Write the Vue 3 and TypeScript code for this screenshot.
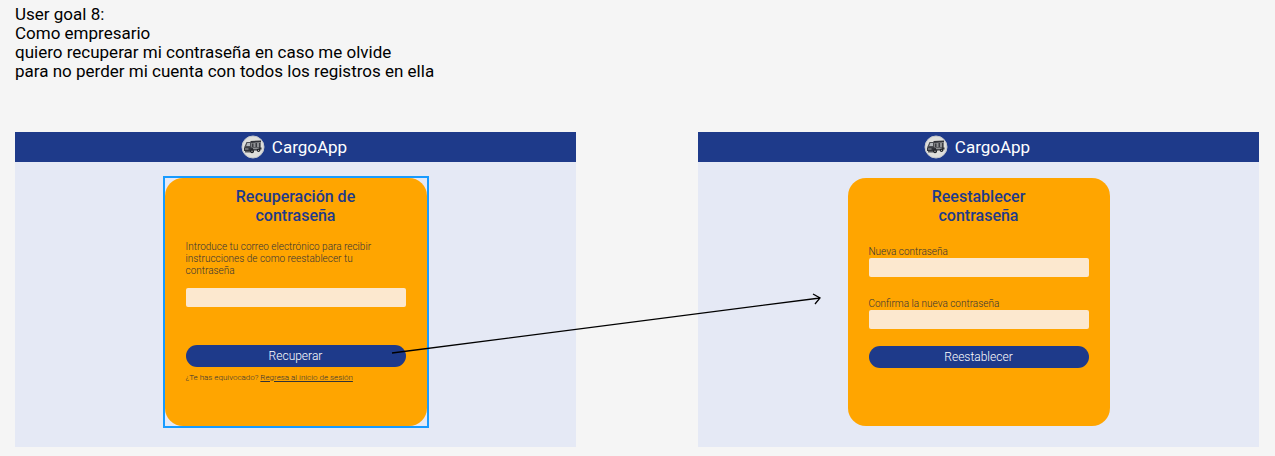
<script setup lang="ts">
interface Field {
  id: string
  label: string
  type: string
}

const story: string[] = [
  'User goal 8:',
  'Como empresario',
  'quiero recuperar mi contraseña en caso me olvide',
  'para no perder mi cuenta con todos los registros en ella',
]

const resetFields: Field[] = [
  { id: 'new-password', label: 'Nueva contraseña', type: 'password' },
  { id: 'confirm-password', label: 'Confirma la nueva contraseña', type: 'password' },
]

const screens: string[] = ['recover', 'reset']
</script>

<template>
  <main class="canvas">
    <p class="story">
      <span v-for="line in story" :key="line">{{ line }}</span>
    </p>

    <div class="board">
      <section v-for="screen in screens" :key="screen" class="screen">
        <header class="bar">
          <svg class="logo" viewBox="0 0 24 24" aria-hidden="true">
            <circle cx="12" cy="12" r="11" fill="#dededb" stroke="#c3c6cc" stroke-width="1" />
            <path d="M9.5 6L20 5.5V7.5L9.5 8Z" fill="#303238" />
            <path d="M10.5 8H19.5V13H10.5Z" fill="#8e9093" />
            <path d="M11 8.5H12.5V12H11ZM14.5 8H16V12H14.5ZM18 8H19.5V13H18Z" fill="#3b3d42" />
            <path d="M5.5 7H10.5V14.5H3.5V11.5Z" fill="#4b4d52" />
            <path d="M6.3 8H9V11H5.2Z" fill="#b4b8bc" />
            <path d="M3 12.5H20.5V14.5L11 16H3Z" fill="#303238" />
            <path d="M4 14H7.5M12 13.7H18" stroke="#a6a8aa" stroke-width="1" />
            <path d="M4 16H9V17.5H4Z" fill="#55575b" />
            <circle cx="11" cy="16.2" r="2" fill="#1d1f23" />
            <circle cx="11" cy="16.2" r=".7" fill="#bbb" />
            <circle cx="17.5" cy="15.3" r="1.7" fill="#1d1f23" />
            <circle cx="17.5" cy="15.3" r=".6" fill="#bbb" />
          </svg>
          <span>CargoApp</span>
        </header>

        <div v-if="screen === 'recover'" class="holder selected">
          <form class="card recover" @submit.prevent>
            <h2>Recuperación de contraseña</h2>
            <label for="email">Introduce tu correo electrónico para recibir instrucciones de como reestablecer tu contraseña</label>
            <input id="email" type="email" />
            <button type="submit">Recuperar</button>
            <p class="hint">¿Te has equivocado? <a href="#">Regresa al inicio de sesión</a></p>
          </form>
        </div>

        <div v-else class="holder">
          <form class="card reset" @submit.prevent>
            <h2>Reestablecer contraseña</h2>
            <div v-for="field in resetFields" :key="field.id" class="field">
              <label :for="field.id">{{ field.label }}</label>
              <input :id="field.id" :type="field.type" />
            </div>
            <button type="submit">Reestablecer</button>
          </form>
        </div>
      </section>

      <svg class="arrow" viewBox="0 0 430 66" aria-hidden="true">
        <path d="M1 60L429 5M422 1L429 5L424 11" fill="none" stroke="#000" stroke-width="1.3" />
      </svg>
    </div>
  </main>
</template>

<style>
body {
  margin: 0;
  background: #f5f5f5;
}
</style>

<style scoped>
.canvas {
  padding: 5px 16px 8px 15px;
  font-family: Roboto, "Liberation Sans", sans-serif;
  color: #000;
}

.story {
  margin: 0 0 51px;
  font-size: 17px;
  line-height: 19px;
}

.story span {
  display: block;
}

.board {
  position: relative;
  display: grid;
  grid-template-columns: 1fr 1fr;
  gap: 122px;
}

.screen {
  background: #e5e9f5;
  padding-bottom: 19px;
}

.bar {
  display: flex;
  align-items: center;
  justify-content: center;
  gap: 7px;
  box-sizing: border-box;
  height: 30px;
  padding: 0 3px 1px 0;
  background: #1e3a8a;
  color: #fff;
  font-size: 17px;
}

.logo {
  width: 24px;
  height: 24px;
}

.holder {
  width: 262px;
  margin: 14px auto 0;
  border: 2px solid transparent;
}

.selected {
  border-color: #189bff;
}

.card {
  box-sizing: border-box;
  min-height: 248px;
  padding: 9px 21px 0;
  border-radius: 18px;
  background: #ffa500;
}

h2 {
  width: 140px;
  margin: 0 auto 16px;
  color: #1e3a8a;
  font-size: 16px;
  font-weight: 500;
  line-height: 19px;
  text-align: center;
}

label {
  display: block;
  color: #333338;
  font-size: 10px;
  font-weight: 300;
  line-height: 12px;
}

.recover label {
  width: 200px;
}

input {
  display: block;
  box-sizing: border-box;
  width: 100%;
  height: 19px;
  margin: 0;
  padding: 0 6px;
  border: 0;
  border-radius: 2px;
  background: #fce8cf;
  font: 300 10px Roboto, "Liberation Sans", sans-serif;
}

.recover input {
  margin: 11px 0 38px;
}

button {
  display: block;
  width: 100%;
  height: 22px;
  margin: 0;
  padding: 0;
  border: 0;
  border-radius: 11px;
  background: #1e3a8a;
  color: #fff;
  font: 300 12px Roboto, "Liberation Sans", sans-serif;
}

.hint {
  margin: 6px 0 0;
  color: #333338;
  font-size: 8px;
  font-weight: 300;
  line-height: 10px;
}

.hint a {
  color: inherit;
}

.reset h2 {
  margin-bottom: 21px;
}

.field + .field {
  margin-top: 21px;
}

.reset .field:last-of-type {
  margin-bottom: 17px;
}

.arrow {
  position: absolute;
  top: 161px;
  left: calc(50% - 246px);
  width: 430px;
  height: 66px;
  pointer-events: none;
}
</style>
